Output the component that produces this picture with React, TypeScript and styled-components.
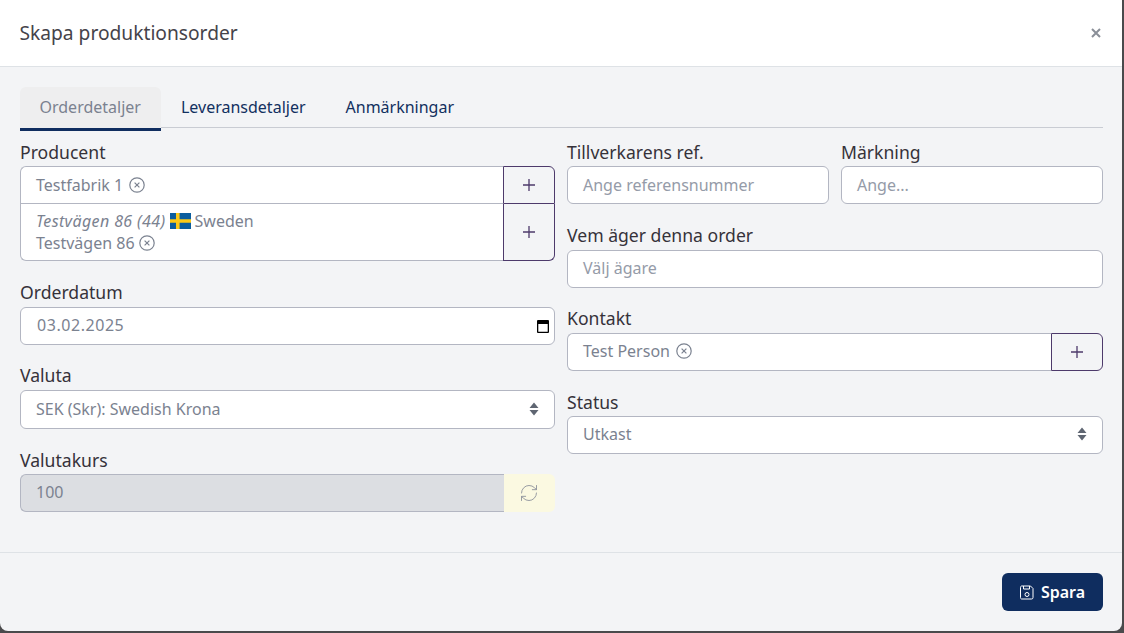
import { createGlobalStyle, styled } from "styled-components";
import { RefreshCw } from "lucide-react";

const GlobalStyle = createGlobalStyle`
  html, body {
    margin: 0;
    height: 100%;
    overflow: hidden;
    background: #4a4a4c;
  }
  body {
    font-family: "Noto Sans", "Open Sans", sans-serif;
    font-size: 16px;
  }
`;

const Modal = styled.div`
  width: 1122px;
  height: 631px;
  display: flex;
  flex-direction: column;
  background: #f3f4f6;
  border-radius: 0 0 8px 8px;
  overflow: hidden;
`;

const Header = styled.header`
  height: 66px;
  flex: none;
  display: flex;
  align-items: center;
  justify-content: space-between;
  padding: 0 19px 0 19.5px;
  background: #fff;
  border-bottom: 1px solid #dee2e6;
`;

const Title = styled.h1`
  margin: 0;
  font-size: 19.2px;
  font-weight: 400;
  line-height: 30px;
  color: #45434a;
`;

const Close = styled.button`
  padding: 0;
  margin-bottom: 1px;
  width: 14px;
  height: 14px;
  border: 0;
  background: none;
  color: #8a8f98;
  display: flex;
`;

const Body = styled.div`
  flex: 1;
  padding: 20px 19px 0 20px;
`;

const Tabs = styled.nav`
  display: flex;
  height: 40px;
  border-bottom: 1px solid #c9ccd3;
`;

const Tab = styled.a<{ $active?: boolean }>`
  display: block;
  height: 44px;
  box-sizing: border-box;
  padding: 0 20.5px 0 19.5px;
  font-size: 16px;
  font-weight: 400;
  line-height: 40px;
  border-radius: 6px 6px 0 0;
  color: ${(p) => (p.$active ? "#7b8290" : "#12305f")};
  background: ${(p) => (p.$active ? "#eeeeef" : "transparent")};
  border-bottom: 3px solid ${(p) => (p.$active ? "#0f2d5f" : "transparent")};
`;

const Columns = styled.div`
  display: grid;
  grid-template-columns: 535px 536px;
  column-gap: 12px;
  padding-top: 12px;
`;

const Column = styled.div`
  display: flex;
  flex-direction: column;
  gap: 18.8px;
`;

const Split = styled.div`
  display: grid;
  grid-template-columns: 262px 262px;
  column-gap: 12px;
`;

const Field = styled.div`
  min-width: 0;
`;

const Label = styled.label`
  display: block;
  height: 26.4px;
  font-size: 17.6px;
  line-height: 24.4px;
  color: #36323a;
`;

const Box = styled.div<{ $h?: number; $disabled?: boolean }>`
  box-sizing: border-box;
  height: ${(p) => p.$h ?? 38}px;
  display: flex;
  align-items: center;
  justify-content: space-between;
  padding: 0 15px 1px;
  font-size: 16px;
  line-height: 22px;
  color: #7b8290;
  background: ${(p) => (p.$disabled ? "#dcdee2" : "#fff")};
  border: 1px solid #b3b6c2;
  border-radius: 6px;
`;

const Placeholder = styled.span`
  color: #959ba8;
`;

const DateValue = styled.span`
  margin-left: 1px;
  letter-spacing: 0.55px;
`;

const Group = styled.div`
  display: flex;
  min-width: 0;
`;

const GroupBox = styled(Box)<{ $top?: boolean; $last?: boolean }>`
  flex: 1;
  min-width: 0;
  justify-content: flex-start;
  gap: 6px;
  border-right: 0;
  border-radius: ${(p) =>
    p.$last ? "0 0 0 6px" : p.$top ? "6px 0 0 0" : "6px 0 0 6px"};
  ${(p) => p.$last && "padding-bottom: 0; border-top: 0; flex-direction: column; align-items: flex-start; gap: 0; justify-content: center;"}
`;

const AddonButton = styled.button<{ $h?: number; $radius: string; $noTop?: boolean }>`
  flex: none;
  box-sizing: border-box;
  width: 52px;
  height: ${(p) => p.$h ?? 38}px;
  padding: 0;
  display: flex;
  align-items: center;
  justify-content: center;
  background: transparent;
  color: #4d3a6b;
  border: 1px solid #4d3a6b;
  border-radius: ${(p) => p.$radius};
  ${(p) => p.$noTop && "border-top: 0;"}
`;

const Line = styled.span`
  display: flex;
  align-items: center;
  gap: 4px;
`;

const Italic = styled.em`
  font-style: italic;
  letter-spacing: 0.38px;
`;

const DatePicker = styled.span`
  display: flex;
  margin: 1px -10px 0 0;
`;

const Refresh = styled.div`
  flex: none;
  width: 51px;
  height: 38px;
  padding-right: 2px;
  box-sizing: border-box;
  display: flex;
  align-items: center;
  justify-content: center;
  color: #8f949c;
  background: #fbf9e1;
  border-radius: 0 6px 6px 0;
`;

const Footer = styled.footer`
  height: 79px;
  flex: none;
  box-sizing: border-box;
  display: flex;
  align-items: flex-start;
  justify-content: flex-end;
  padding: 20px 19px 0 0;
  border-top: 1px solid #dee2e6;
`;

const SaveButton = styled.button`
  box-sizing: border-box;
  width: 101px;
  height: 38px;
  display: flex;
  align-items: center;
  justify-content: center;
  gap: 7px;
  padding: 0;
  border: 0;
  border-radius: 6px;
  background: #0f2d5f;
  color: #fff;
  font-family: inherit;
  font-size: 16px;
  font-weight: 600;
`;

const Plus = () => (
  <svg width="12" height="12" viewBox="0 0 12 12" fill="none" stroke="currentColor" strokeWidth="1.3">
    <path d="M6 0v12M0 6h12" />
  </svg>
);

const Clear = () => (
  <svg width="16" height="16" viewBox="0 0 16 16" fill="none" stroke="#7b8290" strokeWidth="1.2">
    <circle cx="8" cy="8" r="7.2" />
    <path d="M5.6 5.6l4.8 4.8M10.4 5.600l-4.800 4.800" />
  </svg>
);

const Sort = () => (
  <svg width="10" height="14" viewBox="0 0 10 14" fill="#5f6672">
    <path d="M5 0.5L9.5 6h-9zM5 13.5L.5 8h9z" />
  </svg>
);

const Calendar = () => (
  <svg width="12" height="14" viewBox="0 0 12 14">
    <path d="M1 1h10a1 1 0 0 1 1 1v11a1 1 0 0 1-1 1H1a1 1 0 0 1-1-1V2a1 1 0 0 1 1-1zm.3 4v7.700h9.400V5z" fill="#000" fillRule="evenodd" />
  </svg>
);

const SwedishFlag = () => (
  <svg width="21" height="16" viewBox="0 0 21 16">
    <rect width="21" height="16" fill="#0b5d9e" />
    <path d="M6 0h3.600v16H6zM0 6.300h21v3.400H0z" fill="#fcc917" />
  </svg>
);

const SaveIcon = () => (
  <svg width="14" height="15" viewBox="0 0 14 15" fill="none" stroke="currentColor" strokeWidth="1">
    <path d="M1.500 1h9L13 3.500v9a1.500 1.500 0 0 1-1.500 1.500h-10A1.500 1.500 0 0 1 0.500 12.500v-10A1.500 1.500 0 0 1 1.500 1z" />
    <path d="M3.500 1v3h6V1" />
    <circle cx="7" cy="9.500" r="2" />
  </svg>
);

export default function App() {
  return (
    <>
      <GlobalStyle />
      <Modal>
        <Header>
          <Title>Skapa produktionsorder</Title>
          <Close aria-label="Stäng">
            <svg width="14" height="14" viewBox="0 0 14 14" stroke="currentColor" strokeWidth="2">
              <path d="M3 3l8 8M11 3l-8 8" />
            </svg>
          </Close>
        </Header>
        <Body>
          <Tabs>
            <Tab $active>Orderdetaljer</Tab>
            <Tab>Leveransdetaljer</Tab>
            <Tab>Anmärkningar</Tab>
          </Tabs>
          <Columns>
            <Column>
              <Field>
                <Label>Producent</Label>
                <Group>
                  <GroupBox $top>
                    Testfabrik 1 <Clear />
                  </GroupBox>
                  <AddonButton $radius="0 6px 0 0"><Plus /></AddonButton>
                </Group>
                <Group>
                  <GroupBox $last $h={57}>
                    <Line>
                      <Italic>Testvägen 86 (44)</Italic> <SwedishFlag /> Sweden
                    </Line>
                    <Line>
                      Testvägen 86 <Clear />
                    </Line>
                  </GroupBox>
                  <AddonButton $h={57} $noTop $radius="0 0 6px 0"><Plus /></AddonButton>
                </Group>
              </Field>
              <Field>
                <Label>Orderdatum</Label>
                <Box>
                  <DateValue>03.02.2025</DateValue>
                  <DatePicker><Calendar /></DatePicker>
                </Box>
              </Field>
              <Field>
                <Label>Valuta</Label>
                <Box $h={39}>
                  SEK (Skr): Swedish Krona
                  <Sort />
                </Box>
              </Field>
              <Field>
                <Label>Valutakurs</Label>
                <Group>
                  <GroupBox $disabled>100</GroupBox>
                  <Refresh>
                    <RefreshCw size={20} strokeWidth={1.1} />
                  </Refresh>
                </Group>
              </Field>
            </Column>
            <Column>
              <Split>
                <Field>
                  <Label>Tillverkarens ref.</Label>
                  <Box><Placeholder>Ange referensnummer</Placeholder></Box>
                </Field>
                <Field>
                  <Label>Märkning</Label>
                  <Box><Placeholder>Ange...</Placeholder></Box>
                </Field>
              </Split>
              <Field>
                <Label>Vem äger denna order</Label>
                <Box><Placeholder>Välj ägare</Placeholder></Box>
              </Field>
              <Field>
                <Label>Kontakt</Label>
                <Group>
                  <GroupBox>
                    Test Person <Clear />
                  </GroupBox>
                  <AddonButton $radius="0 6px 6px 0"><Plus /></AddonButton>
                </Group>
              </Field>
              <Field>
                <Label>Status</Label>
                <Box>
                  Utkast
                  <Sort />
                </Box>
              </Field>
            </Column>
          </Columns>
        </Body>
        <Footer>
          <SaveButton>
            <SaveIcon /> Spara
          </SaveButton>
        </Footer>
      </Modal>
    </>
  );
}
